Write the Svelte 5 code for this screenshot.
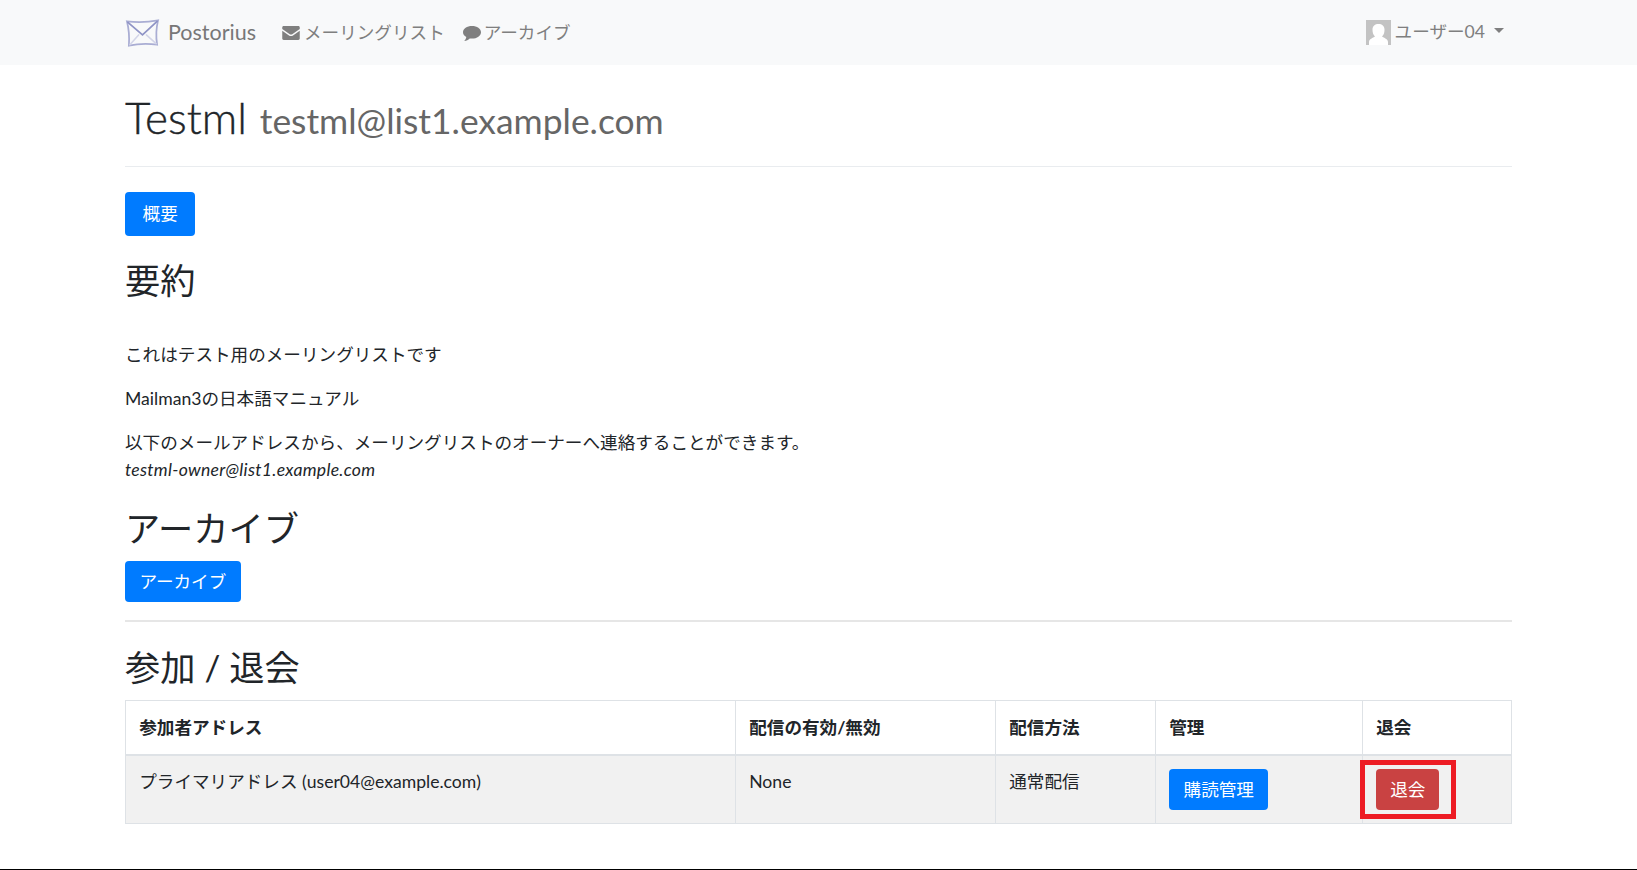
<script>
  const columns = [
    { label: '参加者アドレス', w: 610 },
    { label: '配信の有効/無効', w: 260 },
    { label: '配信方法', w: 160 },
    { label: '管理', w: 207 },
    { label: '退会', w: 149 }
  ];
</script>

<div class="page">
  <nav class="navbar">
    <div class="nav-inner">
      <a class="brand" href="#top">
        <svg class="logo" viewBox="0 0 36 30" aria-hidden="true">
          <g fill="none" stroke-linecap="round">
            <path d="M2 3 Q18 5 34 2 Q31 14 33 27 Q18 25 4 28 Q5 15 2 3Z" stroke="#a9add3" stroke-width="1.8"/>
            <path d="M3 4 L18 17 L33 3" stroke="#8f94c6" stroke-width="1.8"/>
            <path d="M5 27 L14 17 M32 26 L22 17" stroke="#d3d5e8" stroke-width="1.6"/>
          </g>
        </svg>
        <span>Postorius</span>
      </a>
      <a class="nav-link mail" href="#top">
        <svg class="ico" viewBox="0 0 20 16" aria-hidden="true"><path d="M0 3.4V1.6C0 .7.7 0 1.6 0h16.8C19.3 0 20 .7 20 1.6v1.8l-8.6 5.9c-.8.6-2 .6-2.8 0zM0 5.5V14.4C0 15.3.7 16 1.6 16h16.800C19.300 16 20 15.300 20 14.400V5.500l-7.700 5.300c-1.400 1-3.200 1-4.600 0z" fill="#7f7f7f"/></svg>
        <span>メーリングリスト</span>
      </a>
      <a class="nav-link arch" href="#top">
        <svg class="ico chat" viewBox="0 0 18 16" aria-hidden="true"><path d="M9 0C4 0 0 2.700 0 6.200c0 2 1.300 3.700 3.300 4.800-.2 1.500-1 2.900-2 4 2.100-.2 4-1.100 5.400-2.600.7.100 1.500.2 2.300.2 5 0 9-2.800 9-6.400S14 0 9 0z" fill="#7f7f7f"/></svg>
        <span>アーカイブ</span>
      </a>
      <a class="user" href="#top">
        <svg class="avatar" viewBox="0 0 25 25" aria-hidden="true">
          <rect width="25" height="25" fill="#c3c3c3"/>
          <path d="M3 25v-3c0-3 4-4 6-5.500-2-2-2.500-4-2.500-7C6.500 6 9 4 12.500 4s6 2 6 5.500c0 3-.5 5-2.500 7 2 1.500 6 2.500 6 5.500v3z" fill="#fff"/>
        </svg>
        <span>ユーザー04</span>
        <i class="caret"></i>
      </a>
    </div>
  </nav>

  <main class="container">
    <header class="page-header">
      <h1>Testml <small>testml@list1.example.com</small></h1>
    </header>

    <a class="btn first" href="#top">概要</a>

    <h2 class="summary">要約</h2>
    <p>これはテスト用のメーリングリストです</p>
    <p>Mailman3の日本語マニュアル</p>
    <p class="contact">以下のメールアドレスから、メーリングリストのオーナーへ連絡することができます。<br /><em>testml-owner@list1.example.com</em></p>

    <h2 class="archive">アーカイブ</h2>
    <a class="btn lg" href="#top">アーカイブ</a>
    <hr />

    <h2 class="subscribe">参加 / 退会</h2>
    <table>
      <colgroup>
        {#each columns as c}
          <col style="width: {c.w}px" />
        {/each}
      </colgroup>
      <thead>
        <tr>
          {#each columns as c}
            <th>{c.label}</th>
          {/each}
        </tr>
      </thead>
      <tbody>
        <tr>
          <td>プライマリアドレス (user04@example.com)</td>
          <td>None</td>
          <td>通常配信</td>
          <td><a class="btn lg" href="#top">購読管理</a></td>
          <td class="leave"><a class="btn lg danger" href="#top">退会</a><span class="highlight"></span></td>
        </tr>
      </tbody>
    </table>
  </main>
</div>

<style>
  :global(body) {
    margin: 0;
    background: #fff;
  }
  .page {
    height: 870px;
    box-sizing: border-box;
    border-bottom: 1px solid #000;
    overflow: hidden;
    font-family: "Lato", "Noto Sans CJK JP", sans-serif;
    font-size: 17.6px;
    line-height: 1.5;
    color: #212529;
  }
  a {
    text-decoration: none;
  }
  .navbar {
    height: 65px;
    background: #f8f9fa;
  }
  .nav-inner {
    display: flex;
    align-items: center;
    height: 100%;
    padding: 0 125px;
    color: #7f7f7f;
  }
  .brand {
    display: flex;
    align-items: center;
    gap: 8px;
    font-size: 21.5px;
    line-height: 30px;
    color: #777;
    margin-right: 26px;
  }
  .brand span {
    margin-top: -2px;
  }
  .logo {
    width: 35px;
    height: 30px;
    filter: blur(0.5px);
  }
  .nav-link {
    display: flex;
    align-items: center;
    gap: 4px;
    color: #7f7f7f;
    padding-top: 2px;
  }
  .nav-link.mail {
    margin-right: 18px;
  }
  .nav-link.arch {
    gap: 3px;
  }
  .ico {
    width: 18px;
    height: 14px;
  }
  .ico.chat {
    height: 16px;
    margin-top: 1px;
  }
  .user {
    margin-left: auto;
    margin-right: 8px;
    display: flex;
    align-items: center;
    gap: 4px;
    color: #7f7f7f;
  }
  .avatar {
    width: 25px;
    height: 25px;
  }
  .caret {
    width: 0;
    height: 0;
    margin-left: 5px;
    margin-top: -3px;
    border-top: 5px solid #7f7f7f;
    border-left: 5px solid transparent;
    border-right: 5px solid transparent;
  }
  .container {
    padding: 0 125px;
  }
  .page-header {
    padding-top: 26px;
    height: 75px;
    margin-bottom: 25px;
    border-bottom: 1px solid #e9ecef;
  }
  h1 {
    margin: 0;
    font-size: 44px;
    font-weight: 300;
    line-height: 52px;
    -webkit-text-stroke: 0.4px #212529;
  }
  h1 small {
    font-size: 35.4px;
    font-weight: 400;
    color: #666;
    margin-left: 1px;
    -webkit-text-stroke: 0;
  }
  h2 {
    margin: 0;
    font-weight: 400;
    line-height: 1.2;
    font-size: 35.2px;
  }
  .summary {
    margin: 23px 0 41px;
  }
  .archive {
    margin: 24px 0 12px;
  }
  .subscribe {
    margin: 24px 0 12px;
  }
  p {
    margin: 0 0 17.6px;
  }
  .contact {
    margin-bottom: 0;
  }
  em {
    letter-spacing: 0.28px;
  }
  .btn {
    display: inline-block;
    box-sizing: border-box;
    background: #007bff;
    color: #fff;
    border-radius: 4px;
    padding: 9px 17.6px;
    line-height: 26px;
    vertical-align: top;
  }
  .btn.lg {
    padding: 7px 14.4px;
    line-height: 27px;
  }
  .btn.danger {
    background: #c94242;
    padding: 7px 14px;
  }
  hr {
    border: 0;
    border-top: 2px solid #e6e6e6;
    margin: 18px 0 0;
  }
  table {
    width: 100%;
    table-layout: fixed;
    border-collapse: collapse;
  }
  th, td {
    border: 1px solid #dee2e6;
    padding: 13.2px;
    text-align: left;
    vertical-align: top;
  }
  th {
    font-weight: 700;
    border-bottom-width: 2px;
    padding-top: 14px;
    padding-bottom: 12px;
  }
  tbody tr {
    background: #f1f1f1;
  }
  .leave {
    position: relative;
  }
  .highlight {
    position: absolute;
    left: -3px;
    top: 4px;
    width: 96px;
    height: 59px;
    box-sizing: border-box;
    border: 5px solid #ed1c24;
    pointer-events: none;
  }
</style>
